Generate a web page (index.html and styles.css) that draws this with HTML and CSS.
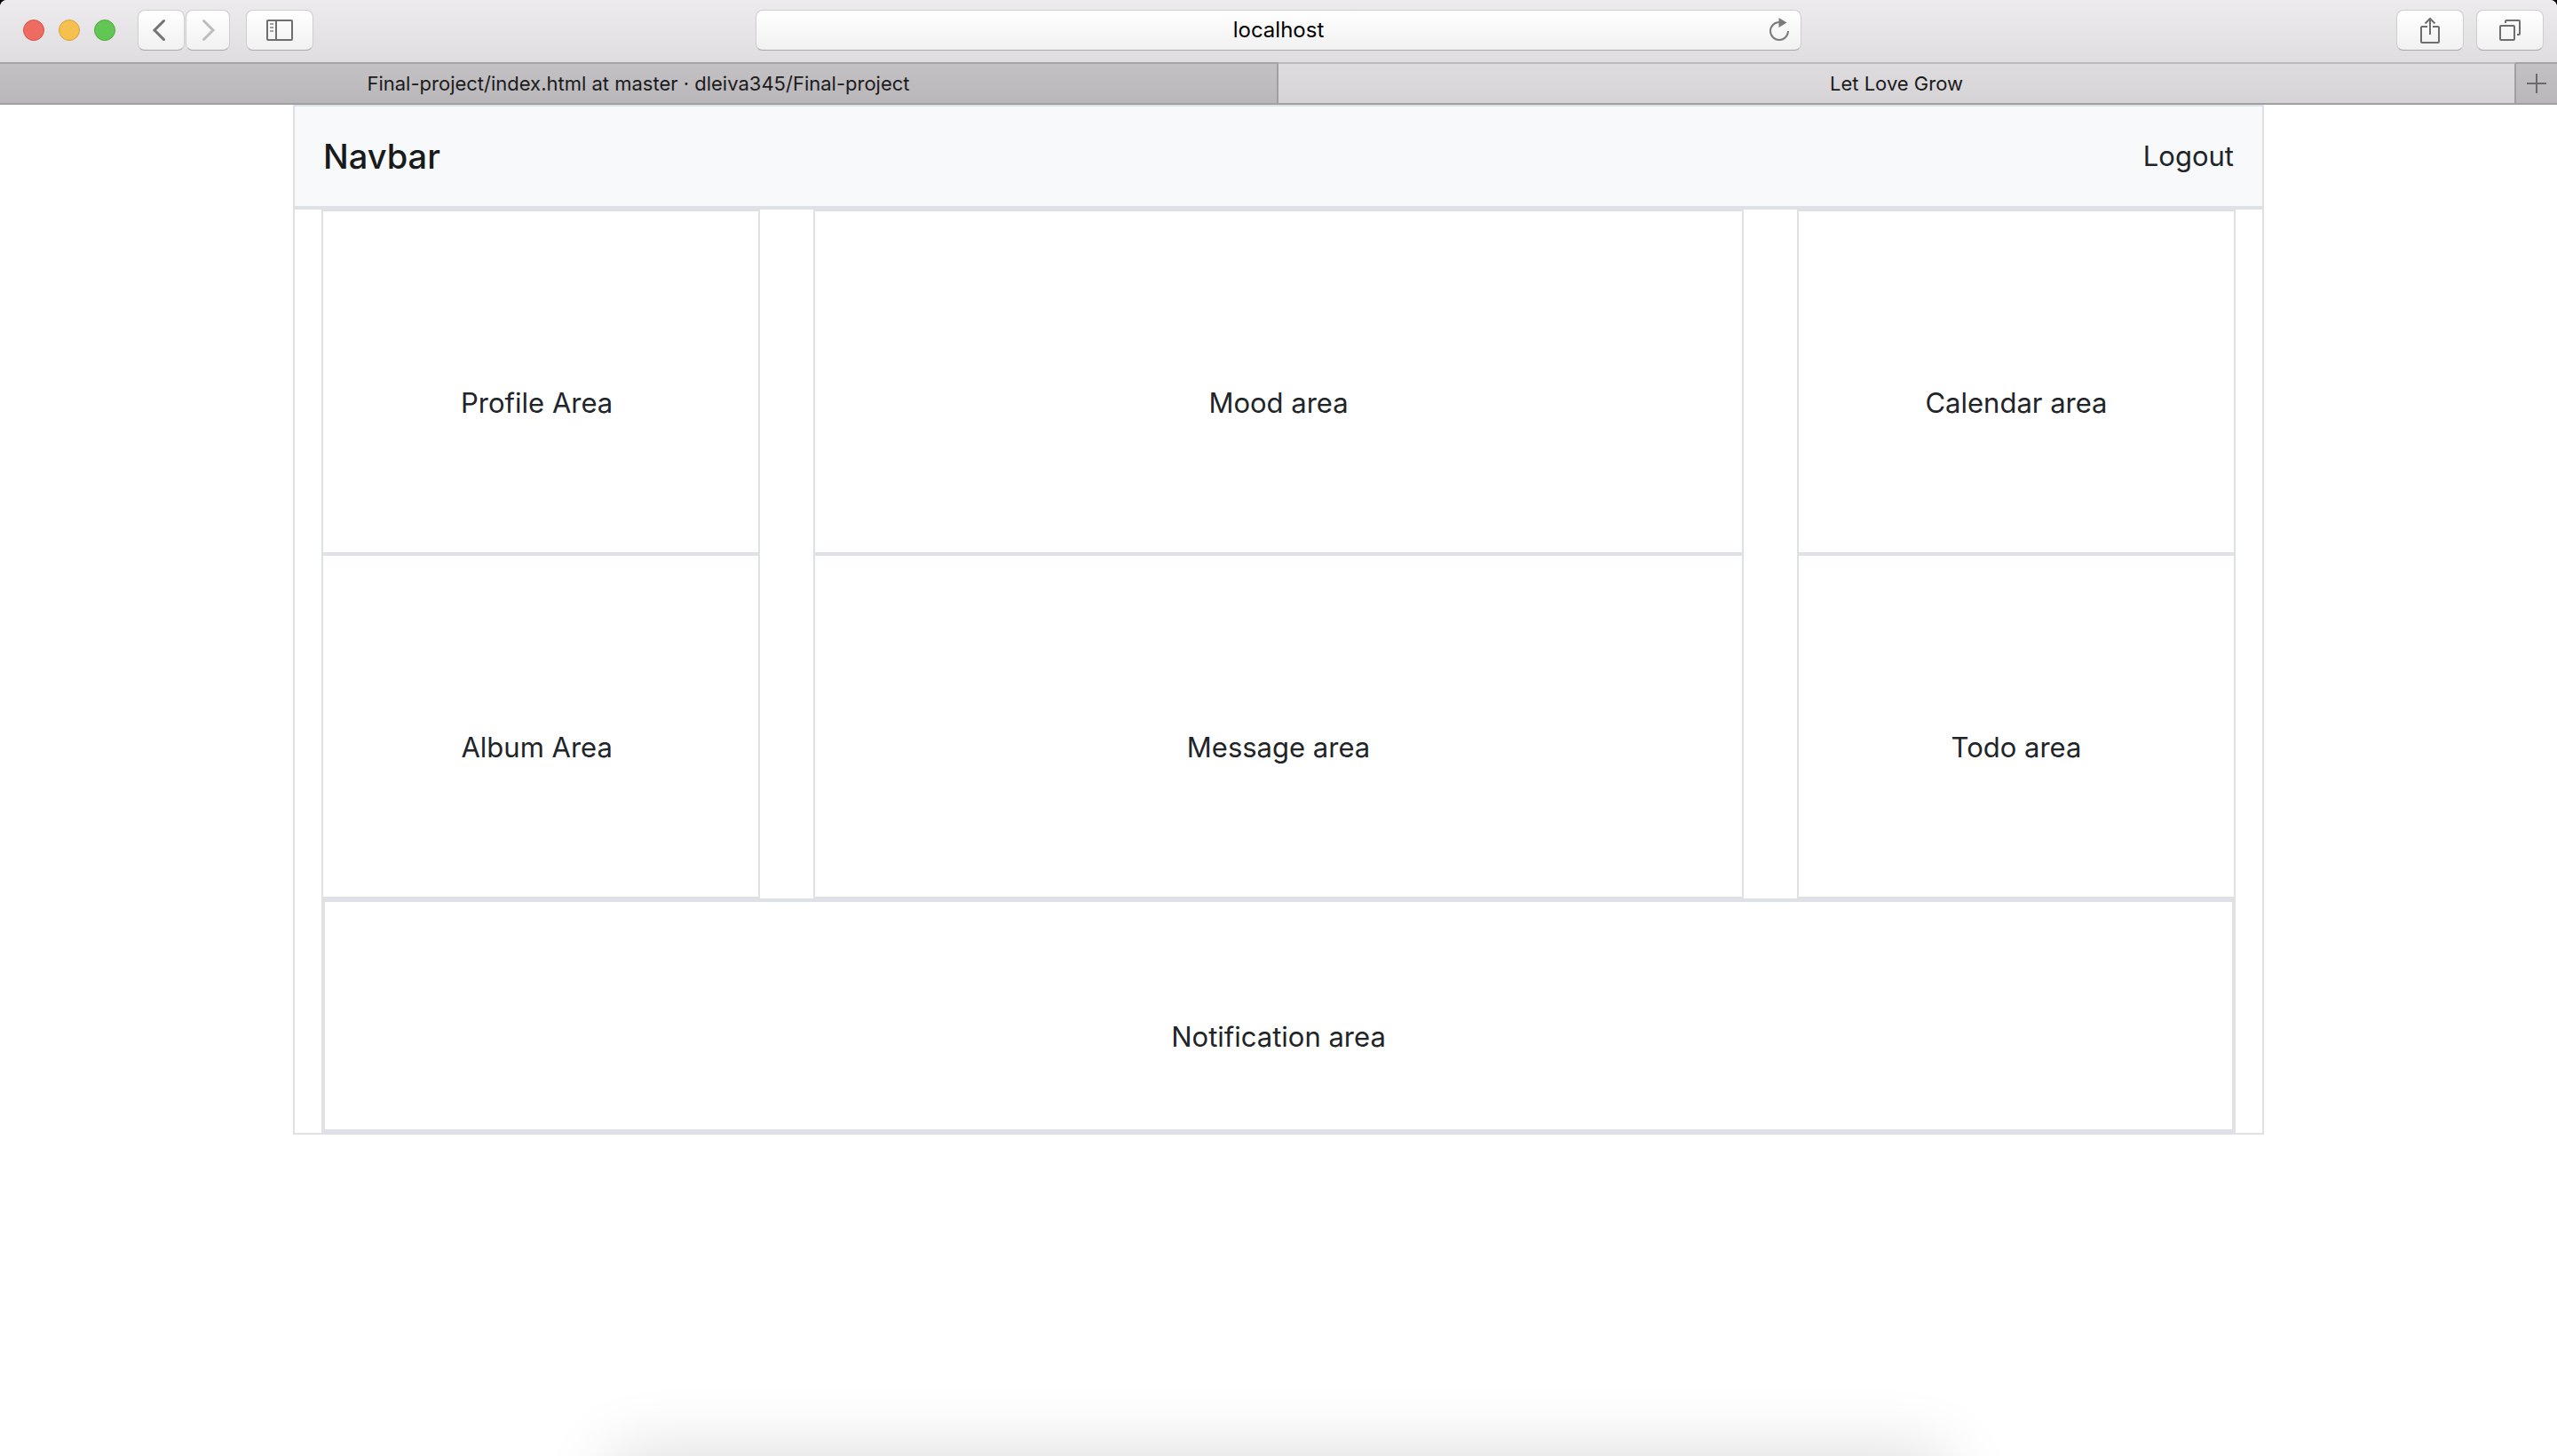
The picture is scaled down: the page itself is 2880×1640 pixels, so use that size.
FILE: index.html
```html
<!DOCTYPE html>
<html lang="en">
<head>
  <meta charset="utf-8">
  <meta name="viewport" content="width=device-width, initial-scale=1">
  <title>Let Love Grow</title>
  <link rel="stylesheet" href="styles.css">
</head>
<body>
  <div class="window">
    <header class="toolbar">
      <div class="toolbar-side">
        <div class="lights">
          <button class="light light-close" type="button" aria-label="Close"></button>
          <button class="light light-minimize" type="button" aria-label="Minimize"></button>
          <button class="light light-zoom" type="button" aria-label="Zoom"></button>
        </div>
        <div class="history">
          <button class="tool tool-back" type="button" aria-label="Back">
            <svg width="16" height="26" viewBox="0 0 16 26" fill="none" stroke="#737373" stroke-width="3" stroke-linecap="round"><path d="M13.500 2.500L3 13l10.500 10.500"/></svg>
          </button>
          <button class="tool tool-forward" type="button" aria-label="Forward">
            <svg width="16" height="26" viewBox="0 0 16 26" fill="none" stroke="#bdbdbd" stroke-width="3" stroke-linecap="round"><path d="M2.500 2.500L13 13 2.500 23.500"/></svg>
          </button>
        </div>
        <button class="tool tool-wide" type="button" aria-label="Show sidebar">
          <svg width="30" height="24" viewBox="0 0 30 24" fill="none" stroke="#6e6e6e" stroke-width="2"><rect x="1" y="1" width="28" height="22" rx="1"/><path d="M11 1v22"/><path stroke="#a0a0a0" d="M4 5h4M4 9h4M4 13h4"/></svg>
        </button>
      </div>
      <div class="address">
        <input class="address-input" type="text" value="localhost" aria-label="Address">
        <button class="reload" type="button" aria-label="Reload">
          <svg width="24" height="28" viewBox="0 0 24 28" fill="none" stroke="#7b7b7b" stroke-width="2"><path d="M12 6A10 10 0 1 0 22 16"/><path d="M11.500 1l9 5.500-9 5.500z" fill="#7b7b7b" stroke="none"/></svg>
        </button>
      </div>
      <div class="toolbar-side toolbar-end">
        <button class="tool tool-wide" type="button" aria-label="Share">
          <svg width="24" height="32" viewBox="0 0 24 32" fill="none" stroke="#6e6e6e" stroke-width="2"><path d="M9 12H3a1 1 0 0 0-1 1v16a1 1 0 0 0 1 1h18a1 1 0 0 0 1-1V13a1 1 0 0 0-1-1h-6"/><path d="M12 21V3M6.500 8.500L12 3l5.500 5.500"/></svg>
        </button>
        <button class="tool tool-wide" type="button" aria-label="Show all tabs">
          <svg width="26" height="26" viewBox="0 0 26 26" fill="none" stroke="#6e6e6e" stroke-width="2"><rect x="2" y="8" width="16" height="16" rx="1"/><path d="M8 5V3a1 1 0 0 1 1-1h14a1 1 0 0 1 1 1v14a1 1 0 0 1-1 1h-2"/></svg>
        </button>
      </div>
    </header>

    <nav class="tabs" aria-label="Tabs">
      <a class="tab" href="#repository">Final-project/index.html at master · dleiva345/Final-project</a>
      <a class="tab tab-active" href="#main" aria-current="page">Let Love Grow</a>
      <button class="tab-new" type="button" aria-label="New tab">
        <svg width="22" height="22" viewBox="0 0 22 22" stroke="#6b6a6b" stroke-width="2"><path d="M11 0v22M0 11h22"/></svg>
      </button>
    </nav>

    <div class="container" id="main">
      <nav class="navbar">
        <a class="navbar-brand" href="#main">Navbar</a>
        <a class="navbar-link" href="#logout">Logout</a>
      </nav>
      <main class="board">
        <div class="row">
          <div class="column">
            <section class="area">Profile Area&nbsp;</section>
            <section class="area">Album Area&nbsp;</section>
          </div>
          <div class="column column-main">
            <section class="area">Mood area</section>
            <section class="area">Message area</section>
          </div>
          <div class="column">
            <section class="area">Calendar area</section>
            <section class="area">Todo area</section>
          </div>
        </div>
        <section class="notifications">Notification area</section>
      </main>
    </div>
    <div class="dock-shadow"></div>
  </div>
</body>
</html>
```
FILE: styles.css
```css
* {
  box-sizing: border-box;
}

body {
  margin: 0;
  background: #000;
  color: #212529;
  font-family: Inter, "Liberation Sans", sans-serif;
  font-size: 31px;
  line-height: 48px;
}

button,
input {
  margin: 0;
  padding: 0;
  border: 0;
  background: none;
  font: inherit;
}

a {
  color: inherit;
  text-decoration: none;
}

svg {
  display: block;
}

.window {
  position: relative;
  min-height: 100vh;
  overflow: hidden;
  border-radius: 8px 8px 0 0;
  background: #fff;
}

/* Browser toolbar */

.toolbar {
  display: grid;
  grid-template-columns: 1fr minmax(0, 1178px) 1fr;
  height: 70px;
  padding: 11px 15px 13px;
  background: linear-gradient(#edebee, #dfdde0);
}

.toolbar-side {
  display: flex;
  align-items: stretch;
}

.toolbar-end {
  justify-content: flex-end;
  gap: 14px;
}

.lights {
  display: flex;
  align-items: center;
  gap: 16px;
  margin: 0 25px 0 11px;
}

.light {
  width: 24px;
  height: 24px;
  border: 1px solid;
  border-radius: 50%;
}

.light-close {
  border-color: #d9534a;
  background: #ed6b60;
}

.light-minimize {
  border-color: #dca03c;
  background: #f6c04f;
}

.light-zoom {
  border-color: #4fa93f;
  background: #62c655;
}

.history {
  display: flex;
  gap: 1px;
  margin-right: 18px;
}

.tool,
.address {
  border: 1px solid #cfcdd0;
  border-bottom-color: #a9a8aa;
  border-radius: 8px;
  background: linear-gradient(#fff, #f1f1f1);
}

.tool {
  display: flex;
  align-items: center;
  justify-content: center;
}

.tool-back {
  width: 53px;
  padding-right: 6px;
}

.tool-forward {
  width: 50px;
  padding-left: 2px;
}

.tool-wide {
  width: 76px;
}

.address {
  display: flex;
  align-items: center;
}

.address-input {
  flex: 1;
  min-width: 0;
  padding-left: 48px;
  color: #000;
  font-size: 24px;
  line-height: 32px;
  text-align: center;
}

.reload {
  display: flex;
  justify-content: center;
  width: 48px;
  padding-bottom: 2px;
}

/* Tab strip */

.tabs {
  display: flex;
  height: 48px;
  border-bottom: 2px solid #a19fa3;
  color: #1b1b1c;
  font-size: 22px;
  line-height: 44px;
  text-align: center;
}

.tab,
.tab-new {
  border-top: 2px solid #a5a3a6;
  background: linear-gradient(#c3c1c4, #b9b7ba);
}

.tab {
  width: 50%;
  overflow: hidden;
  border-right: 2px solid #a19fa3;
  text-overflow: ellipsis;
  white-space: nowrap;
}

.tab-active {
  flex: 1;
  border-top-color: #bcbabd;
  background: linear-gradient(#dedcdf, #d5d3d6);
}

.tab-new {
  display: flex;
  align-items: center;
  justify-content: center;
  width: 46px;
}

/* Page */

.container {
  max-width: 2220px;
  margin: 0 auto;
}

.navbar {
  display: flex;
  align-items: center;
  justify-content: space-between;
  padding: 32px;
  border: 2px solid #dee2e6;
  background: #f8f9fa;
}

.navbar-brand {
  color: #191a1b;
  font-size: 38px;
  font-weight: 500;
}

.board {
  border: 2px solid #dee2e6;
}

.row {
  display: flex;
}

.column {
  width: 25%;
  padding: 0 30px;
}

.column-main {
  width: 50%;
}

.area {
  padding: 192px 0 144px;
  border: 2px solid #dee2e6;
  text-align: center;
}

.notifications {
  margin: 0 30px;
  padding: 128px 0 80px;
  border: 4px solid #dee2e6;
  text-align: center;
}

/* Soft shadow cast along the bottom edge by the dock */

.dock-shadow {
  position: absolute;
  right: 24%;
  bottom: -80px;
  left: 24%;
  height: 80px;
  box-shadow: 0 0 80px rgba(0, 0, 0, 0.16);
}
```
